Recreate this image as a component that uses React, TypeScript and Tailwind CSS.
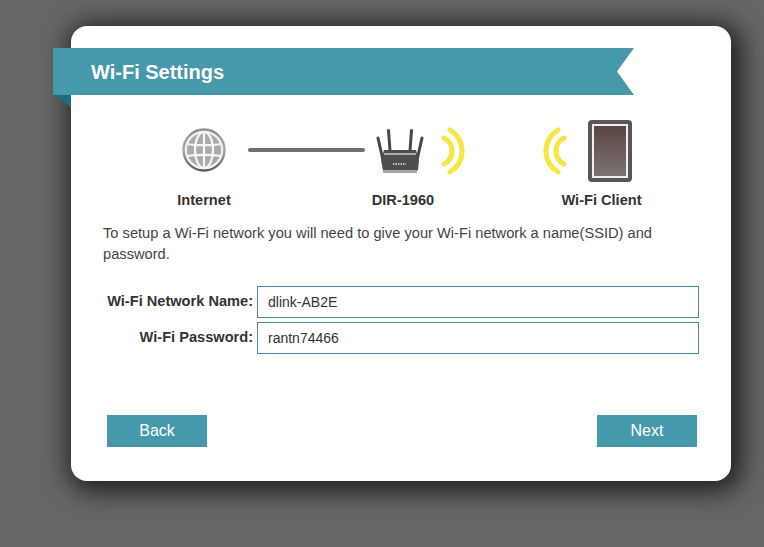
import React from 'react';

function Globe() {
  return (
    <svg width="46" height="46" viewBox="0 0 46 46" fill="none">
      <defs>
        <linearGradient id="ring" x1="0" y1="0" x2="0" y2="1">
          <stop offset="0" stopColor="#8f8f8f" />
          <stop offset="0.5" stopColor="#a8a8a8" />
          <stop offset="1" stopColor="#5c5c5c" />
        </linearGradient>
      </defs>
      <circle cx="23" cy="23" r="20.5" fill="#a9aaac" stroke="url(#ring)" strokeWidth="2.4" />
      <circle cx="23" cy="23" r="18.2" stroke="#f2f2f2" strokeWidth="2.2" />
      <g stroke="#f6f6f6" strokeWidth="2.2">
        <ellipse cx="23" cy="23" rx="9" ry="18" />
        <path d="M23 5v36" />
        <path d="M6 17c8 1.6 26 1.6 34 0" />
        <path d="M6 29c8-1.6 26-1.6 34 0" />
      </g>
    </svg>
  );
}

function Router() {
  return (
    <svg width="50" height="46" viewBox="0 0 50 46" fill="none">
      <g stroke="#4a4745" strokeWidth="3" strokeLinecap="round">
        <path d="M2 10l4.5 20" />
        <path d="M12.5 2.5l1.5 20" />
        <path d="M35.5 2.5l-1.5 20" />
        <path d="M46 10l-4.5 20" />
      </g>
      <path d="M8 22h32l3 10-1 10.5H7L5 32z" fill="#504d4b" />
      <path d="M8 26h32" stroke="#ededed" strokeWidth="1.2" />
      <path d="M17 36h13" stroke="#e6e6e6" strokeWidth="1.3" strokeDasharray="1.5 1" />
      <path d="M7 44h34" stroke="#8b8987" strokeWidth="1.5" />
    </svg>
  );
}

function Waves({ flip }: { flip?: boolean }) {
  return (
    <svg width="24" height="48" viewBox="0 0 24 48" fill="none" className={flip ? '-scale-x-100' : ''}>
      <g stroke="#f8e443" strokeWidth="5" strokeLinecap="round">
        <path d="M3 11c6 3 8 8 8 13s-2 10-8 13" />
        <path d="M9 3c8 5 12 13 12 21s-4 16-12 21" />
      </g>
    </svg>
  );
}

function Tablet() {
  return (
    <div className="w-[44px] h-[62px] rounded-[4px] bg-[#5a5655] p-[4px]">
      <div className="w-full h-full border-[2px] border-[#f2f0ef] bg-gradient-to-b from-[#5a4644] to-[#7a7472]" />
    </div>
  );
}

function Field({ label, value }: { label: string; value: string }) {
  return (
    <div className="flex items-center h-[32px]">
      <label className="w-[182px] text-right text-[14.6px] font-bold text-[#333]">{label}</label>
      <input
        readOnly
        value={value}
        className="ml-[4px] w-[442px] h-[32px] px-[10px] border border-[#4a8ea6] bg-white text-[14px] text-[#333] outline-none"
      />
    </div>
  );
}

export default function App() {
  return (
    <div className="w-[764px] h-[547px] overflow-hidden bg-[#666666] pt-[26px] pl-[71px] font-['Liberation_Sans',Arial,sans-serif]">
      <div className="w-[660px] h-[455px] flex flex-col rounded-[16px] bg-white shadow-[4px_4px_26px_6px_rgba(0,0,0,0.72)]">
        {/* Ribbon */}
        <div className="relative mt-[22px] -ml-[18px] w-[581px] h-[47px] shrink-0">
          <div className="h-full flex items-center pl-[38px] bg-[#4698ab] [clip-path:polygon(0_0,100%_0,calc(100%-17px)_50%,100%_100%,0_100%)]">
            <h1 className="text-[20px] font-bold text-white">Wi-Fi Settings</h1>
          </div>
          <div className="absolute left-0 top-full w-[18px] h-[12px] bg-[#1d6e80] [clip-path:polygon(0_0,100%_0,100%_100%)]" />
        </div>

        {/* Diagram */}
        <div className="mt-[25px] h-[62px] flex items-center pl-[110px]">
          <div className="mb-[2px] flex"><Globe /></div>
          <div className="mb-[2px] ml-[21px] w-[117px] h-[4px] rounded-full bg-[#6f6f6f]" />
          <div className="ml-[11px] flex"><Router /></div>
          <div className="ml-[15px] flex"><Waves /></div>
          <div className="ml-[78px] flex"><Waves flip /></div>
          <div className="ml-[21px] flex"><Tablet /></div>
        </div>
        <div className="mt-[8px] flex text-[14.6px] font-bold text-[#333] pl-[33px]">
          <span className="w-[200px] text-center">Internet</span>
          <span className="w-[198px] text-center">DIR-1960</span>
          <span className="w-[199px] text-center">Wi-Fi Client</span>
        </div>

        <p className="mt-[11px] pl-[32px] pr-[60px] text-[14.67px] leading-[21px] text-[#444]">
          To setup a Wi-Fi network you will need to give your Wi-Fi network a name(SSID) and password.
        </p>

        {/* Form */}
        <div className="mt-[21px] flex flex-col gap-[4px]">
          <Field label="Wi-Fi Network Name:" value="dlink-AB2E" />
          <Field label="Wi-Fi Password:" value="rantn74466" />
        </div>

        <div className="mt-[61px] flex justify-between pl-[36px] pr-[34px]">
          <button className="w-[100px] h-[32px] bg-[#4698ab] text-[16px] text-white">Back</button>
          <button className="w-[100px] h-[32px] bg-[#4698ab] text-[16px] text-white">Next</button>
        </div>
      </div>
    </div>
  );
}
